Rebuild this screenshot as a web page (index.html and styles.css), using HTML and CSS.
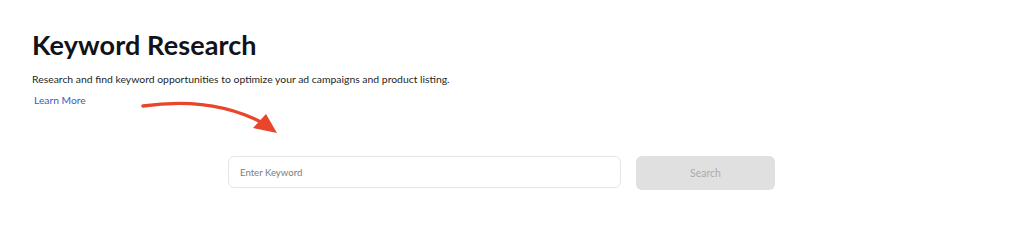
FILE: index.html
```html
<!DOCTYPE html>
<html>
<head>
<meta charset="utf-8">
<link rel="stylesheet" href="styles.css">
</head>
<body>
<div class="page">
  <h1 class="title">Keyword Research</h1>
  <p class="subtitle">Research and find keyword opportunities to optimize your ad campaigns and product listing.</p>
  <a class="learn" href="#">Learn More</a>
  <svg class="arrow" width="150" height="45" viewBox="0 0 150 45">
    <path d="M3 9 C 45 3, 85 6, 123 26" fill="none" stroke="#e8452a" stroke-width="3.4" stroke-linecap="round"/>
    <polygon points="137,36 113,31 126,17" fill="#e8452a"/>
  </svg>
  <div class="search-row">
    <div class="input"><span class="placeholder">Enter Keyword</span></div>
    <button class="btn">Search</button>
  </div>
</div>
</body>
</html>
```
FILE: styles.css
```css
html, body {
  margin: 0;
  padding: 0;
  background: #ffffff;
}
body {
  width: 1024px;
  height: 252px;
  overflow: hidden;
  font-family: Lato, "Noto Sans", sans-serif;
}
.page {
  position: relative;
  padding: 28px 0 0 32px;
}
.title {
  margin: 0;
  font-size: 27px;
  font-weight: 700;
  color: #111318;
  line-height: 34px;
  letter-spacing: 0.1px;
}
.subtitle {
  margin: 9px 0 0 0;
  font-size: 10.4px;
  line-height: 16px;
  color: #1d1f24;
}
.learn {
  display: inline-block;
  margin: 5px 0 0 2px;
  font-size: 10.3px;
  line-height: 16px;
  color: #3c5cc0;
  text-decoration: none;
}
.arrow {
  position: absolute;
  left: 140px;
  top: 97px;
}
.search-row {
  display: flex;
  gap: 15px;
  margin: 48px 0 0 196px;
  align-items: flex-start;
}
.input {
  box-sizing: border-box;
  width: 393px;
  height: 32px;
  border: 1px solid #e6e6e6;
  border-radius: 6px;
  display: flex;
  align-items: center;
  padding-left: 11px;
}
.placeholder {
  font-size: 9.6px;
  color: #7a7d84;
}
.btn {
  box-sizing: border-box;
  width: 139px;
  height: 34px;
  border: none;
  border-radius: 6px;
  background: #e0e0e0;
  color: #a9abaf;
  font-family: Lato, "Noto Sans", sans-serif;
  font-size: 10.5px;
  padding: 0;
}
```
